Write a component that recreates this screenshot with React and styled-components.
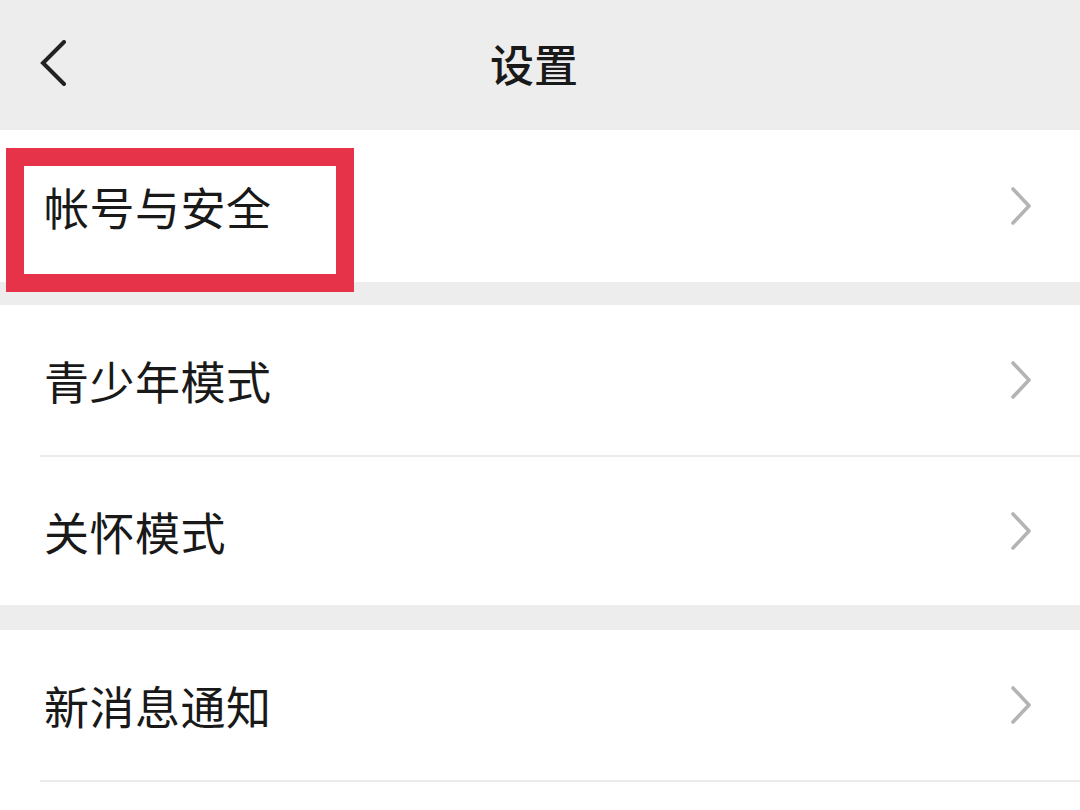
import React from 'react';
import styled, { createGlobalStyle } from 'styled-components';

const Global = createGlobalStyle`
	html, body {
		margin: 0;
		padding: 0;
		background: #ededed;
	}
	body {
		font-family: "Noto Sans CJK SC", "Noto Sans", sans-serif;
		color: #191919;
	}
`;

const Screen = styled.div`
	width: 1080px;
	height: 810px;
	overflow: hidden;
	background: #ededed;
	display: flex;
	flex-direction: column;
`;

const NavBar = styled.header`
	height: 130px;
	flex-shrink: 0;
	display: grid;
	grid-template-columns: 120px 1fr 120px;
	align-items: center;
	background: #ededed;

	h1 {
		margin: 0;
		text-align: center;
		font-size: 44px;
		font-weight: 500;
		line-height: 1;
		color: #191919;
		transform: translate(-6px, -2px);
	}
`;

const Back = styled.button`
	border: 0;
	background: none;
	padding: 0 0 0 38px;
	height: 100%;
	display: flex;
	align-items: center;
	transform: translateY(-2px);
`;

const Group = styled.section`
	background: #fff;
	margin-top: ${p => p.$gap}px;
	display: flex;
	flex-direction: column;
	flex-shrink: 0;
`;

const Row = styled.div`
	position: relative;
	box-sizing: border-box;
	height: ${p => p.$h || 150}px;
	padding: 0 48px 0 44px;
	display: flex;
	align-items: center;
	justify-content: space-between;

	& + & {
		border-top: 2px solid #ebebeb;
	}
	& + &::before {
		content: "";
		position: absolute;
		left: 0;
		top: -2px;
		width: 40px;
		height: 2px;
		background: #fff;
	}

	span {
		font-size: 45px;
		line-height: 1;
		letter-spacing: 0.5px;
	}
`;

const Highlight = styled.div`
	position: absolute;
	left: 6px;
	top: 18px;
	width: 348px;
	height: 144px;
	box-sizing: border-box;
	border: 18px solid #e6334a;
	pointer-events: none;
	z-index: 2;
`;

const Chevron = () => (
	<svg width="22" height="38" viewBox="0 0 22 38">
		<polyline points="3,2 19,19 3,36" fill="none" stroke="#b4b4b4" strokeWidth="3.6" strokeLinecap="round" strokeLinejoin="round" />
	</svg>
);

const BackIcon = () => (
	<svg width="30" height="46" viewBox="0 0 30 46">
		<polyline points="26,2 5,23 26,44" fill="none" stroke="#222" strokeWidth="4" strokeLinecap="round" strokeLinejoin="miter" />
	</svg>
);

const Item = ({ label, marked, h }) => (
	<Row $h={h}>
		{marked && <Highlight />}
		<span>{label}</span>
		<Chevron />
	</Row>
);

const App = () => (
	<Screen>
		<Global />
		<NavBar>
			<Back aria-label="返回"><BackIcon /></Back>
			<h1>设置</h1>
			<div />
		</NavBar>
		<Group $gap={0}>
			<Item label="帐号与安全" marked h={152} />
		</Group>
		<Group $gap={23}>
			<Item label="青少年模式" />
			<Item label="关怀模式" />
		</Group>
		<Group $gap={25}>
			<Item label="新消息通知" />
			<Item label="" />
		</Group>
	</Screen>
);

export default App;
